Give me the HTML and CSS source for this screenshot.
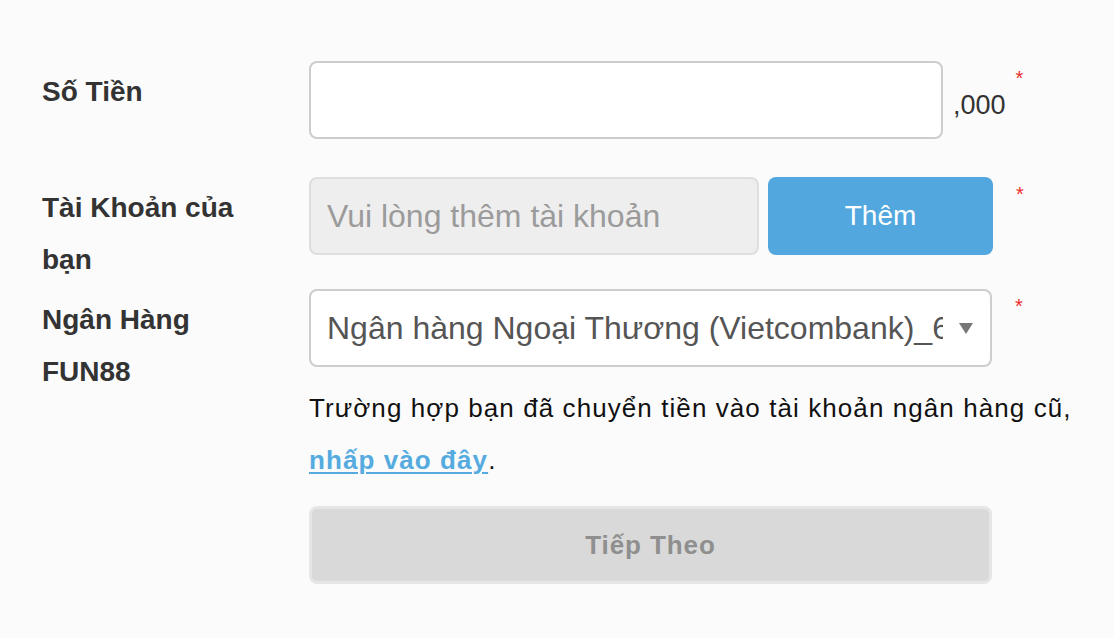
FILE: index.html
```html
<!DOCTYPE html>
<html lang="vi">
<head>
<meta charset="utf-8">
<title>Nạp tiền</title>
<link rel="stylesheet" href="styles.css">
</head>
<body>
<form class="form">
  <div class="row row-amount">
    <div class="label">Số Tiền</div>
    <div class="field">
      <div class="control-line">
        <input class="input input-amount" type="text">
        <span class="suffix">,000</span>
        <span class="req">*</span>
      </div>
    </div>
  </div>

  <div class="row row-account">
    <div class="label">Tài Khoản của bạn</div>
    <div class="field">
      <div class="control-line">
        <input class="input input-disabled" type="text" placeholder="Vui lòng thêm tài khoản" disabled>
        <button type="button" class="btn-add">Thêm</button>
        <span class="req req-wide">*</span>
      </div>
    </div>
  </div>

  <div class="row row-bank">
    <div class="label">Ngân Hàng FUN88</div>
    <div class="field">
      <div class="control-line">
        <div class="select">
          <span class="select-text">Ngân hàng Ngoại Thương (Vietcombank)_6789</span>
          <span class="select-arrow"></span>
        </div>
        <span class="req req-wide">*</span>
      </div>
      <p class="note">Trường hợp bạn đã chuyển tiền vào tài khoản ngân hàng cũ, <a class="note-link" href="#">nhấp vào đây</a>.</p>
      <button type="button" class="btn-next" disabled>Tiếp Theo</button>
    </div>
  </div>
</form>
</body>
</html>
```

FILE: styles.css
```css
* { box-sizing: border-box; }

html, body {
  margin: 0;
  background: #fbfbfb;
}

body {
  font-family: "Liberation Sans", Arial, sans-serif;
  color: #333;
}

.form {
  padding: 61px 0 0 42px;
}

.row {
  display: grid;
  grid-template-columns: 267px 1fr;
  align-items: start;
}

.row-amount { margin-bottom: 38px; }
.row-account { margin-bottom: 3px; }

.label {
  max-width: 220px;
  padding-top: 5px;
  font-size: 28px;
  font-weight: bold;
  line-height: 52px;
  color: #333;
}

.control-line {
  display: flex;
  align-items: flex-start;
}

.input {
  height: 78px;
  border: 2px solid #cdcdcd;
  border-radius: 8px;
  background: #fff;
  padding: 0 16px;
  font-family: "Liberation Sans", Arial, sans-serif;
  font-size: 32px;
  color: #555;
  outline: none;
}

.input-amount { width: 634px; }

.input-disabled {
  width: 450px;
  background: #eeeeee;
  border-color: #dedede;
}

.input-disabled::placeholder {
  color: #9b9b9b;
  opacity: 1;
}

.suffix {
  margin: 29px 0 0 10px;
  font-size: 27px;
  color: #333;
}

.req {
  margin: 6px 0 0 10px;
  font-size: 20px;
  line-height: 23px;
  color: #ee2b2b;
}

.req-wide { margin-left: 23px; }

.btn-add {
  width: 225px;
  height: 78px;
  margin-left: 9px;
  border: 0;
  border-radius: 8px;
  background: #52a8de;
  color: #fff;
  font-family: "Liberation Sans", Arial, sans-serif;
  font-size: 28px;
}

.select {
  width: 683px;
  height: 78px;
  display: flex;
  align-items: center;
  border: 2px solid #cdcdcd;
  border-radius: 8px;
  background: #fff;
  padding: 0 17px 0 16px;
}

.select-text {
  flex: 1;
  overflow: hidden;
  white-space: nowrap;
  font-size: 32px;
  color: #555;
}

.select-arrow {
  width: 0;
  height: 0;
  margin-left: 16px;
  border-left: 7px solid transparent;
  border-right: 7px solid transparent;
  border-top: 11px solid #777;
}

.note {
  width: 790px;
  margin: 15px 0 0;
  font-size: 26px;
  letter-spacing: 1.08px;
  line-height: 52px;
  color: #111;
}

.note-link {
  color: #55abdf;
  font-weight: bold;
  text-decoration: underline;
  text-decoration-thickness: 2px;
  text-underline-offset: 3px;
}

.btn-next {
  display: block;
  width: 683px;
  height: 78px;
  margin-top: 20px;
  border: 3px solid #e6e6e6;
  border-radius: 8px;
  background: #d9d9d9;
  color: #8f8f8f;
  font-family: "Liberation Sans", Arial, sans-serif;
  font-size: 26px;
  font-weight: bold;
  letter-spacing: 0.9px;
}
```
